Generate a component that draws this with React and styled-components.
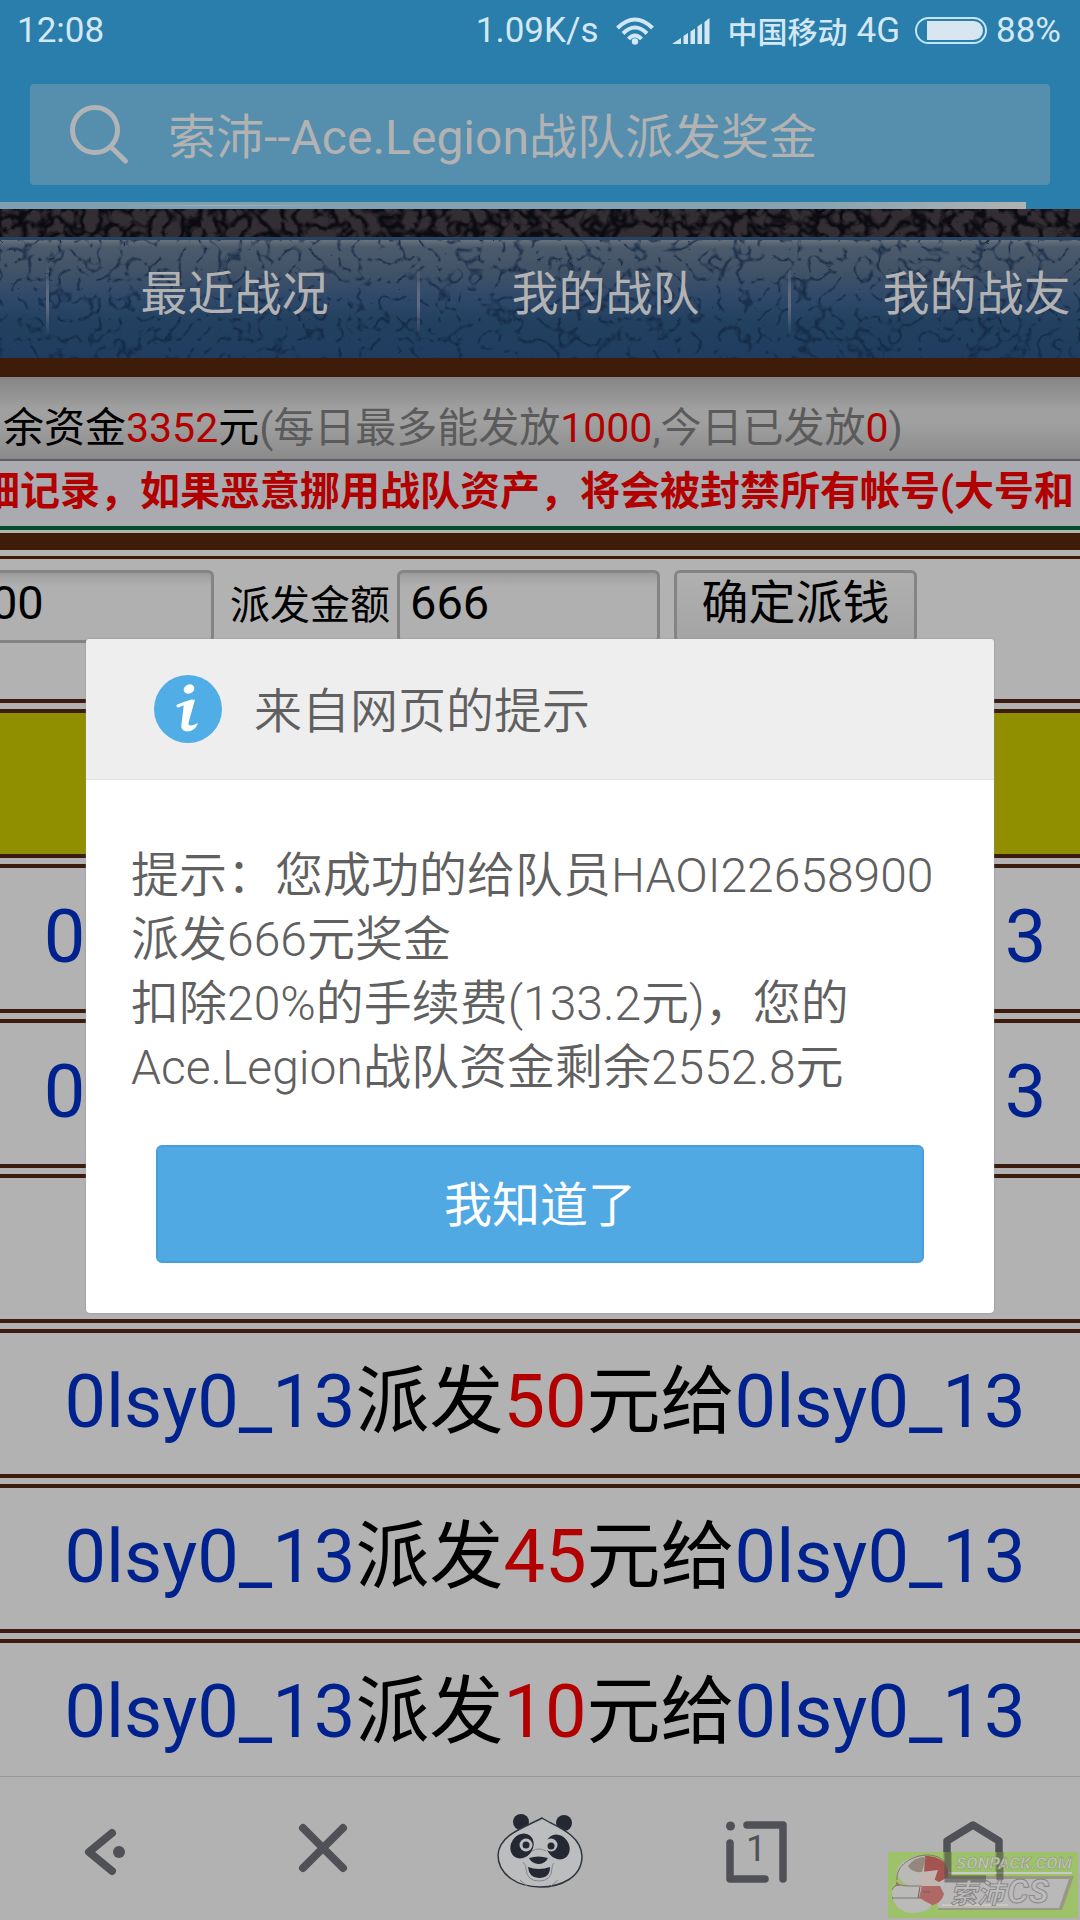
import React, { useState } from 'react';
import styled, { createGlobalStyle } from 'styled-components';

const rows = [
  { id: 1, head: true },
  { id: 2, from: '0lsy0_13', amount: 100, to: '0lsy0_13' },
  { id: 3, from: '0lsy0_13', amount: 100, to: '0lsy0_13' },
  { id: 4 },
  { id: 5, from: '0lsy0_13', amount: 50, to: '0lsy0_13' },
  { id: 6, from: '0lsy0_13', amount: 45, to: '0lsy0_13' },
  { id: 7, from: '0lsy0_13', amount: 10, to: '0lsy0_13' },
];

const App = () => {
  const [query, setQuery] = useState('索沛--Ace.Legion战队派发奖金');
  const [player, setPlayer] = useState('HAOI22658900');
  const [amount, setAmount] = useState('666');
  const [open, setOpen] = useState(true);

  return (
    <Screen>
      <GlobalStyle />
      <Header>
        <StatusBar />
        <SearchBox>
          <SearchIcon />
          <SearchInput
            type="text"
            aria-label="搜索"
            value={query}
            onChange={e => setQuery(e.target.value)}
          />
        </SearchBox>
        <Progress />
      </Header>

      <Page>
        <Banner>
          <Texture id="stone" dark />
        </Banner>
        <Nav>
          <Texture id="marble" />
          <NavStub />
          <NavLink href="#recent">最近战况</NavLink>
          <NavLink href="#team">我的战队</NavLink>
          <NavLink href="#mates">我的战友</NavLink>
        </Nav>
        <Funds>
          余资金<Red>3352</Red>元
          <Muted>
            (每日最多能发放<Red>1000</Red>,今日已发放<Red>0</Red>)
          </Muted>
        </Funds>
        <Notice>
          <NoticeText>细记录，如果恶意挪用战队资产，将会被封禁所有帐号(大号和</NoticeText>
        </Notice>
        <Divider />
        <PayForm onSubmit={e => e.preventDefault()}>
          <PlayerInput
            type="text"
            aria-label="队员"
            value={player}
            onChange={e => setPlayer(e.target.value)}
          />
          <label htmlFor="amount">派发金额</label>
          <AmountInput
            id="amount"
            type="text"
            value={amount}
            onChange={e => setAmount(e.target.value)}
          />
          <PayButton type="submit">确定派钱</PayButton>
        </PayForm>
        <Records>
          <tbody>
            {rows.map(row => (
              <tr key={row.id}>
                <Cell $head={row.head}>
                  {row.from && (
                    <>
                      <UserLink href="#from">{row.from}</UserLink>派发
                      <Red>{row.amount}</Red>元给
                      <UserLink href="#to">{row.to}</UserLink>
                    </>
                  )}
                </Cell>
              </tr>
            ))}
          </tbody>
        </Records>
      </Page>

      <Toolbar>
        <ToolButton type="button" aria-label="后退"><BackIcon /></ToolButton>
        <ToolButton type="button" aria-label="停止"><StopIcon /></ToolButton>
        <ToolButton type="button" aria-label="菜单"><PandaIcon /></ToolButton>
        <ToolButton type="button" aria-label="标签页"><TabsIcon /></ToolButton>
        <ToolButton type="button" aria-label="主页"><HomeIcon /></ToolButton>
      </Toolbar>
      <Watermark />

      {open && (
        <Overlay>
          <Dialog role="dialog" aria-labelledby="dialog-title">
            <DialogHeader>
              <InfoIcon />
              <DialogTitle id="dialog-title">来自网页的提示</DialogTitle>
            </DialogHeader>
            <DialogBody>
              <p>提示：您成功的给队员HAOI22658900派发666元奖金</p>
              <p>扣除20%的手续费(133.2元)，您的Ace.Legion战队资金剩余2552.8元</p>
            </DialogBody>
            <ConfirmButton type="button" onClick={() => setOpen(false)}>
              我知道了
            </ConfirmButton>
          </Dialog>
        </Overlay>
      )}
    </Screen>
  );
};

export default App;

const StatusBar = () => (
  <Status>
    <Clock>12:08</Clock>
    <Speed>1.09K/s</Speed>
    <svg width="38" height="28" viewBox="0 0 38 28" fill="none" stroke="#d3e8f4" strokeWidth="4">
      <path d="M1.5 11 Q19 -6 36.5 11" />
      <path d="M7 16.5 Q19 4.5 31 16.5" />
      <path d="M12.5 22 Q19 15 25.5 22" />
      <circle cx="19" cy="24.5" r="3.2" fill="#d3e8f4" stroke="none" />
    </svg>
    <svg width="38" height="26" viewBox="0 0 38 26" fill="#d3e8f4">
      <path d="M0 26 L9 20 V26Z M11.5 18 L16 15 V26 H11.5Z M18.5 13.5 L23 10.5 V26 H18.5Z M25.5 8.5 L30 5.5 V26 H25.5Z M32.5 4 L37.5 0 V26 H32.5Z" />
    </svg>
    <Carrier>中国移动</Carrier>
    <span>4G</span>
    <svg width="72" height="27" viewBox="0 0 72 27">
      <rect x="1" y="1" width="70" height="25" rx="12.5" fill="none" stroke="#c2e6f8" strokeWidth="2" />
      <path d="M12 4 H58.5 A9.5 9.5 0 0 1 58.5 23 H12Z" fill="#d7e6f0" />
    </svg>
    <span>88%</span>
  </Status>
);

const SearchIcon = () => (
  <svg width="60" height="60" viewBox="0 0 60 60" fill="none" stroke="#b0b4b7" strokeWidth="5" strokeLinecap="round">
    <circle cx="25" cy="25" r="22.5" />
    <path d="M41 42 L55.5 56" />
  </svg>
);

// fractal noise pushed through a steep contrast curve gives the carved veins
const Texture = ({ id, dark }) => (
  <TextureSvg aria-hidden="true">
    <filter id={id} x="0" y="0" width="100%" height="100%" colorInterpolationFilters="sRGB">
      <feTurbulence type="turbulence" baseFrequency={dark ? 0.06 : 0.05} numOctaves="2" seed="7" />
      <feColorMatrix
        values={
          dark
            ? '0 0 0 0 0.2  0 0 0 0 0.18  0 0 0 0 0.2  4 0 0 0 -0.3'
            : '0 0 0 0 0.06  0 0 0 0 0.14  0 0 0 0 0.25  -5 0 0 0 0.8'
        }
      />
    </filter>
    <rect width="100%" height="100%" filter={`url(#${id})`} />
  </TextureSvg>
);

const BackIcon = () => (
  <svg width="64" height="64" viewBox="0 0 64 64" fill="none" stroke="#505156" strokeWidth="8" strokeLinecap="round" strokeLinejoin="round">
    <path d="M36 13 L13 32 L36 51" />
    <circle cx="43" cy="32" r="6" fill="#505156" stroke="none" />
  </svg>
);

const StopIcon = () => (
  <svg width="64" height="64" viewBox="0 0 64 64" fill="none" stroke="#505156" strokeWidth="8" strokeLinecap="round">
    <path d="M11 8 L51 48 M51 8 L11 48" />
  </svg>
);

const PandaIcon = () => (
  <svg width="88" height="78" viewBox="0 0 88 78">
    <circle cx="25" cy="9" r="8" fill="#232833" />
    <circle cx="68" cy="10" r="8" fill="#232833" />
    <path d="M46 5 C56 12 85 20 86 43 C86 65 64 74 44 74 C22 74 2 62 2 42 C3 21 32 13 46 5Z" fill="#bcbdbf" stroke="#30343d" strokeWidth="1.5" />
    <ellipse cx="26" cy="33" rx="11" ry="13" transform="rotate(35 26 33)" fill="#232833" />
    <ellipse cx="62" cy="34" rx="11" ry="13" transform="rotate(-35 62 34)" fill="#232833" />
    <circle cx="30" cy="32" r="6.5" fill="#bcbdbf" />
    <circle cx="55" cy="32" r="6.5" fill="#bcbdbf" />
    <circle cx="30" cy="32" r="3.5" fill="#232833" />
    <circle cx="55" cy="33" r="3.5" fill="#232833" />
    <path d="M36 38 Q43 34 50 38" fill="none" stroke="#85878c" />
    <path d="M33 45 Q42 42 52 45 Q49 51 42 51 Q35 50 33 45Z" fill="#232833" />
    <path d="M32 54 Q43 58 54 54 Q54 65 43 65 Q33 65 32 54Z" fill="#232833" />
    <path d="M27 49 Q31 53 30 56 Q31 68 43 68 Q56 68 56 55 Q56 52 58 50" fill="none" stroke="#85878c" />
    <path d="M24 67 L31 73 M62 67 L55 73" stroke="#85878c" />
  </svg>
);

const TabsIcon = () => (
  <TabsWrap>
    <svg width="64" height="64" viewBox="0 0 64 64" fill="none" stroke="#505156" strokeWidth="7.5" strokeLinecap="round" strokeLinejoin="round">
      <path d="M23 5 H59 V59 M6 23 V59 H41" />
      <circle cx="6.5" cy="6" r="4.5" fill="#505156" stroke="none" />
    </svg>
    <TabCount>1</TabCount>
  </TabsWrap>
);

const HomeIcon = () => (
  <svg width="64" height="64" viewBox="0 0 64 64" fill="none" stroke="#505156" strokeWidth="7.5" strokeLinecap="round" strokeLinejoin="round">
    <path d="M44 59 H7 V21 L33 5 L59 21 V60" />
  </svg>
);

const InfoIcon = () => (
  <svg width="68" height="68" viewBox="0 0 68 68">
    <circle cx="34" cy="34" r="34" fill="#51ade6" />
    <ellipse cx="35" cy="14" rx="5.5" ry="4.5" fill="#fff" transform="rotate(-25 35 14)" />
    <path d="M24 31 Q31 28 38 26" fill="none" stroke="#fff" strokeWidth="3" strokeLinecap="round" />
    <path d="M30 28 L41 24.5 L34.5 48 Q34 53 44 48 Q41 56.5 33 56.5 Q26 56 27.5 49Z" fill="#fff" />
  </svg>
);

const Watermark = () => (
  <WatermarkSvg viewBox="0 0 190 66" role="img" aria-label="SONPACK.COM 索沛CS">
    <rect width="190" height="66" fill="#96c750" fillOpacity="0.75" />
    <path d="M50 24 H186 L174 58 H50Z" fill="#9b8d88" fillOpacity="0.8" />
    <path d="M50 27 H181 L171 56 H50Z" fill="#b9b9b9" />
    <path d="M50 21 H184 M54 53 H120" stroke="#c9c9c5" strokeWidth="2" />
    <ellipse cx="35" cy="20" rx="26" ry="16" fill="#b9bab5" />
    <path d="M37 4 C55 4 62 14 60 25 L51 30 L36 22Z" fill="#a35350" />
    <path d="M20 14 Q26 5 38 5 L34 20 Q24 21 20 14Z" fill="#94887d" />
    <path d="M33 20 L50 18 L42 41 L30 42Z" fill="#c3b5b1" />
    <path d="M9 28 Q8 34 25 34 H52 L56 42 C54 50 47 54 38 54 L34 47 H4" fill="#ae6865" />
    <path d="M4 38 Q6 31 18 34 H34 L31 46 L44 53 Q38 61 25 61 Q4 60 4 38Z" fill="#babbb8" />
    <path d="M4 38 Q6 31 18 34 H34 M4 46 H32 M9 28 C7 3 53 -6 58 14" fill="none" stroke="#817773" />
    <path d="M32 35 L30 46 M35 40 H42" stroke="#765956" />
    <path d="M60 0 V27 H98 M112 0 V28" fill="none" stroke="#50514f" strokeWidth="7" strokeOpacity="0.6" />
    <text x="68" y="17" fontFamily="Roboto, sans-serif" fontSize="17" fontStyle="italic" fontWeight="700" fill="#c0c4b8" stroke="#8d9578" strokeWidth="0.5">SONPACK.COM</text>
    <text x="62" y="51" fontFamily="'Noto Sans CJK SC', sans-serif" fontSize="27" fontStyle="italic" fontWeight="700" fill="#bcbcbc" stroke="#857f7f" strokeWidth="0.8">索沛</text>
    <text x="119" y="51" fontFamily="Roboto, sans-serif" fontSize="34" fontStyle="italic" fontWeight="700" fill="#bcbcbc" stroke="#857f7f" strokeWidth="0.8">CS</text>
  </WatermarkSvg>
);

const GlobalStyle = createGlobalStyle`
  * {
    box-sizing: border-box;
  }

  body {
    margin: 0;
    font-family: Roboto, 'Noto Sans CJK SC', sans-serif;
    background: #b2b2b2;
  }

  svg {
    display: block;
    flex: none;
  }

  p {
    margin: 0;
  }

  a {
    text-decoration: none;
  }

  button,
  input {
    font-family: inherit;
    margin: 0;
  }
`;

const Screen = styled.div`
  position: relative;
  display: flex;
  flex-direction: column;
  height: 100vh;
  overflow: hidden;
`;

const Header = styled.header`
  flex: none;
  background: #2a7eab;
`;

const Status = styled.div`
  display: flex;
  align-items: center;
  height: 61px;
  padding: 0 19px 0 17px;
  color: #d3e8f4;
  font-size: 35px;
  white-space: nowrap;

  svg {
    margin-right: 18px;
  }

  svg:last-of-type {
    margin: 0 9px 0 15px;
  }
`;

const Clock = styled.span`
  flex: 1;
`;

const Speed = styled.span`
  margin-right: 17px;
`;

const Carrier = styled.span`
  margin-right: 9px;
  padding-bottom: 2px;
  font-size: 30px;
  font-weight: 500;
`;

const SearchBox = styled.div`
  display: flex;
  align-items: center;
  gap: 38px;
  height: 101px;
  margin: 23px 30px 17px;
  padding: 0 40px;
  border-radius: 4px;
  background: #568eae;
`;

const SearchInput = styled.input`
  flex: 1;
  min-width: 0;
  height: 80px;
  padding: 0 0 4px;
  border: 0;
  outline: 0;
  background: transparent;
  color: #b2b2b2;
  font-size: 48px;
  line-height: 76px;
`;

const Progress = styled.div`
  width: 95%;
  height: 7px;
  background: radial-gradient(ellipse at 22% 50%, #aab0b2, transparent 9%),
    linear-gradient(90deg, #7c9fb3, #87a3b1 80%, #b0b2b3);
`;

const Page = styled.main`
  flex: 1;
  min-height: 0;
  overflow: hidden;
`;

const TextureSvg = styled.svg`
  position: absolute;
  inset: 0;
  width: 100%;
  height: 100%;
`;

const Banner = styled.div`
  position: relative;
  height: 28px;
  background: #0c0b12;
`;

const Nav = styled.nav`
  position: relative;
  display: flex;
  height: 140px;
  overflow: hidden;
  border-top: 3px solid #2a4262;
  border-bottom: 19px solid #3d1c0a;
  background: linear-gradient(#68727c, #4c5a6c 6%, #435367 25%, #30496a 48%, #22405f 70%, #203d60);
`;

const NavStub = styled.div`
  flex: 0 0 46px;
`;

const NavLink = styled.a`
  position: relative;
  flex: 0 0 371px;
  display: flex;
  align-items: center;
  justify-content: center;
  padding: 0 0 20px 6px;
  color: #b2b2b2;
  font-size: 47px;

  &::before {
    content: '';
    position: absolute;
    left: 0;
    top: 22px;
    width: 3px;
    height: 74px;
    background: linear-gradient(transparent, #5d6a80 40%, #5d6a80 60%, transparent);
  }
`;

const Funds = styled.div`
  height: 84px;
  padding: 21px 0 0 3px;
  border-bottom: 2px solid #5e5e5e;
  background: linear-gradient(#858585, #a0a0a0 40%, #a0a0a0 55%, #8b8b8b);
  color: #000;
  font-size: 41px;
  line-height: 60px;
  white-space: nowrap;
`;

const Muted = styled.span`
  color: #5b5b5b;
`;

const Red = styled.span`
  color: #b20000;
`;

const Notice = styled.div`
  height: 69px;
  overflow: hidden;
  border-bottom: 4px solid #004d2b;
  background: #a9abb1;
`;

/* the page is scrolled sideways, so the line starts left of the window */
const NoticeText = styled.p`
  margin-left: -20px;
  color: #b20000;
  font-size: 40px;
  font-weight: 700;
  line-height: 62px;
  white-space: nowrap;
`;

const Divider = styled.div`
  height: 26px;
  border-top: 3px solid #b2b2ae;
  border-bottom: 6px solid #b2b2b2;
  background: #3d1c0a;
`;

const PayForm = styled.form`
  display: flex;
  align-items: flex-start;
  height: 147px;
  padding-top: 11px;
  margin-left: -290px;
  border-top: 3px solid #3d1c0a;
  border-bottom: 4px solid #3d1c10;
  color: #000;
  font-size: 40px;
  line-height: 72px;
  white-space: nowrap;

  label {
    margin: 0 7px 0 16px;
  }
`;

const AmountInput = styled.input`
  flex: none;
  width: 263px;
  height: 73px;
  padding: 0 10px 8px;
  border: 3px solid #848484;
  border-radius: 6px;
  background: linear-gradient(#9c9c9c, #b0b0b0 20%);
  color: #000;
  font-size: 47px;
`;

const PlayerInput = styled(AmountInput)`
  width: 504px;
`;

const PayButton = styled.button`
  flex: none;
  width: 243px;
  height: 73px;
  margin-left: 14px;
  padding: 0 0 8px;
  border: 3px solid #848484;
  border-radius: 6px;
  background: linear-gradient(#b0b0b0, #a4a4a4);
  color: #000;
  font-size: 47px;
  line-height: 60px;
`;

const Records = styled.table`
  width: 100%;
  border-collapse: separate;
  border-spacing: 0 6px;
`;

const Cell = styled.td`
  height: 149px;
  padding: 0 0 4px 10px;
  border: solid #3d1c10;
  border-width: 4px 0;
  background: ${({ $head }) => ($head ? '#8f8f00' : '#b2b2b2')};
  color: #000;
  font-size: 74px;
  line-height: 100px;
  text-align: center;
  white-space: nowrap;
`;

const UserLink = styled.a`
  color: #00228f;
`;

const Toolbar = styled.footer`
  flex: none;
  display: grid;
  grid-template-columns: repeat(5, 1fr);
  height: 144px;
  border-top: 1px solid #989898;
  background: #b2b2b2;
`;

const ToolButton = styled.button`
  display: flex;
  align-items: center;
  justify-content: center;
  padding: 6px 0 0;
  border: 0;
  background: transparent;
`;

const TabsWrap = styled.span`
  position: relative;
`;

const TabCount = styled.span`
  position: absolute;
  inset: 0;
  color: #505156;
  font-size: 36px;
  line-height: 58px;
`;

const WatermarkSvg = styled.svg`
  position: absolute;
  right: 2px;
  bottom: 2px;
  width: 190px;
  height: 66px;
`;

const Overlay = styled.div`
  position: absolute;
  inset: 0;
  display: flex;
  align-items: center;
  justify-content: center;
  padding: 32px 86px 0;
`;

const Dialog = styled.section`
  width: 100%;
  padding-bottom: 50px;
  border-radius: 4px;
  background: #fff;
  box-shadow: 0 0 2px #8c8c8c;
  color: #606060;
  font-size: 48px;
  font-weight: 350;
  overflow: hidden;
`;

const DialogHeader = styled.div`
  display: flex;
  align-items: center;
  gap: 32px;
  height: 141px;
  padding: 0 68px;
  border-bottom: 1px solid #e2e2e2;
  background: #eee;
`;

const DialogTitle = styled.h1`
  margin: 0;
  padding-top: 6px;
  font-size: 48px;
  font-weight: 350;
  line-height: 64px;
`;

const DialogBody = styled.div`
  padding: 64px 45px 45px;
  line-height: 64px;
`;

const ConfirmButton = styled.button`
  display: block;
  width: calc(100% - 140px);
  height: 118px;
  margin: 0 auto;
  padding: 0 0 6px;
  border: 2px solid #479fd9;
  border-radius: 6px;
  background: #51a9e4;
  color: #fff;
  font-size: 48px;
`;
